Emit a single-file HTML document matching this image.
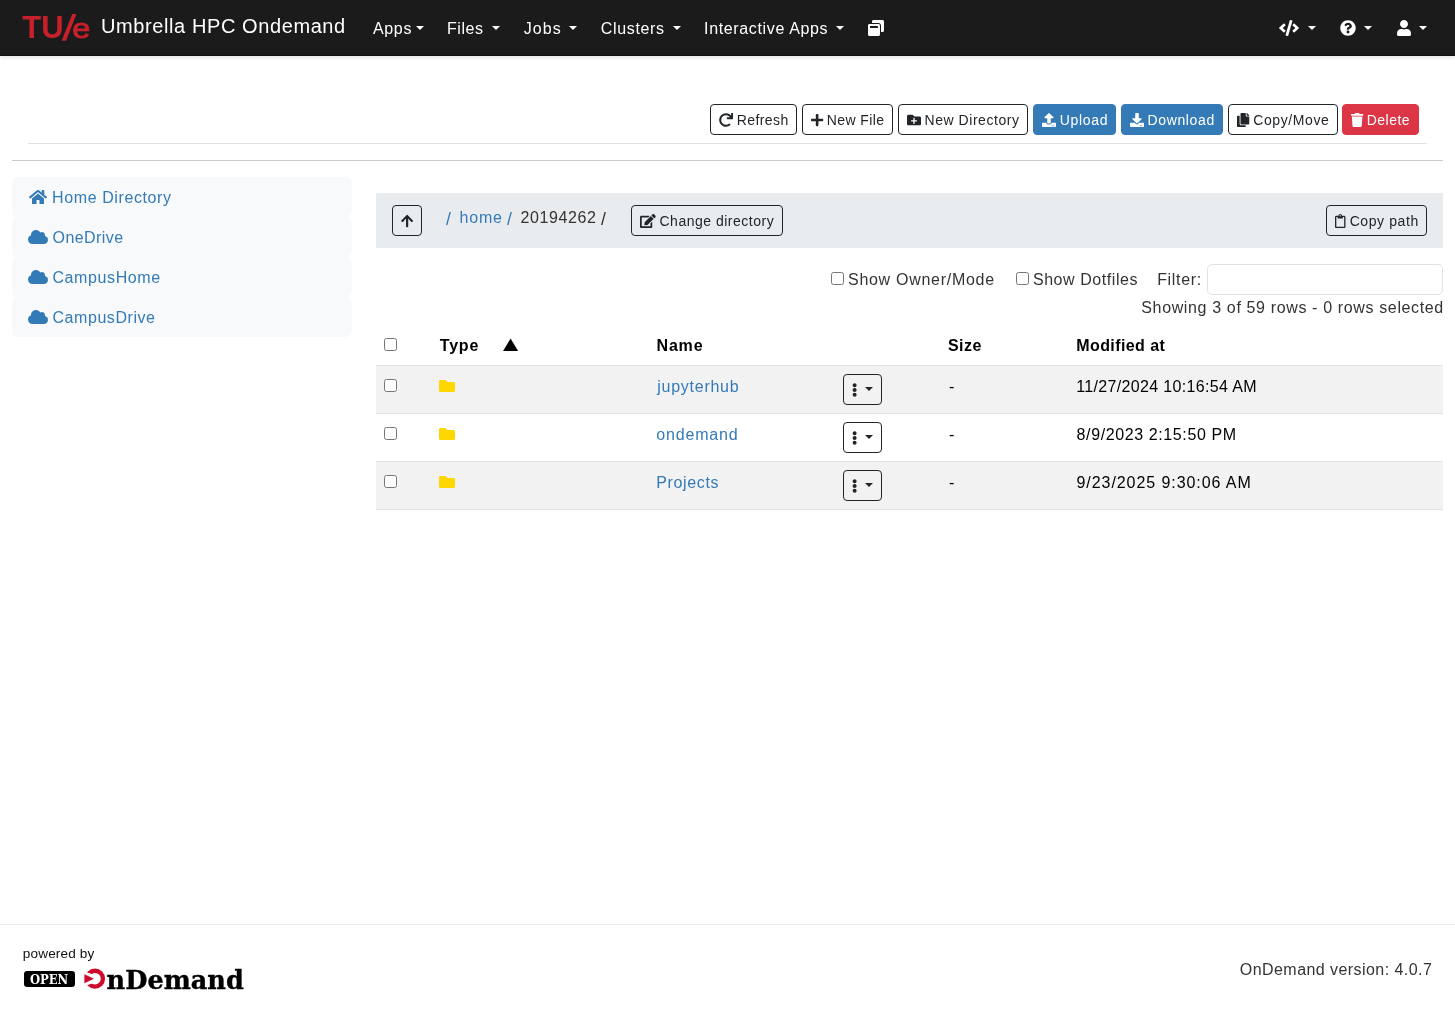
<!DOCTYPE html>
<html lang="en">
<head>
<meta charset="utf-8">
<title>Dashboard - Umbrella HPC Ondemand</title>
<style>
html,body{margin:0;padding:0;}
body{width:1455px;height:1013px;position:relative;overflow:hidden;background:#fff;
  font-family:"Liberation Sans",sans-serif;font-size:16px;color:#212529;}
.abs,.t,.btn,.ic,.caret,.hl,input.cb{position:absolute;}
.t{white-space:pre;display:block;}
nav.top{position:absolute;left:0;top:0;width:1455px;height:55px;background:#1b1b1b;
  border-bottom:1px solid #111;box-sizing:content-box;box-shadow:0 2px 4px rgba(0,0,0,.09);}
.caret{width:0;height:0;border-left:4.8px solid transparent;border-right:4.8px solid transparent;border-top:4.8px solid #fff;}
.caret.sm{border-left-width:4.2px;border-right-width:4.2px;border-top:4.2px solid #212529;}
.btn{box-sizing:border-box;height:31px;border:1px solid #212529;border-radius:4px;background:transparent;}
.btn.primary{background:#337ab7;border-color:#337ab7;}
.btn.danger{background:#dc3545;border-color:#dc3545;}
.ic{display:block;overflow:visible;}
.hl{height:1px;}
.side{position:absolute;left:12px;width:340px;height:40px;background:#f8f9fa;border-radius:6px;}
.pathbar{position:absolute;left:376px;top:193px;width:1067px;height:55px;background:#e9ecef;}
input.cb{margin:0;width:13px;height:13px;}
.filter{position:absolute;margin:0;padding:0 8px;outline:none;font:inherit;left:1207px;top:264px;width:236px;height:30.5px;box-sizing:border-box;border:1px solid #dee2e6;border-radius:5px;background:#fff;}
.row{position:absolute;left:376px;width:1067px;height:47px;border-bottom:1px solid #dee2e6;}
.row.odd{background:#f2f2f2;}
footer.ft{position:absolute;left:0;top:924px;width:1455px;height:89px;border-top:1px solid #ececec;box-sizing:border-box;}
</style>
</head>
<body>
<div id="app" style="position:absolute;left:0;top:0;width:1455px;height:1013px;will-change:transform">

<!-- ============ NAVBAR ============ -->
<nav class="top">
<svg class="ic" style="left:18px;top:8px" width="80" height="40" viewBox="0 0 80 40">
  <g fill="#c8202a" font-family="Liberation Sans, sans-serif">
    <text x="4.3" y="30.4" font-size="31.6" font-weight="700" textLength="41.2" lengthAdjust="spacingAndGlyphs">TU</text>
    <text x="0" y="0" font-size="36" font-weight="700" transform="translate(43.6,32.1) skewX(-11.5)">/</text>
    <text x="0" y="0" font-size="27.8" font-weight="400" stroke="#c8202a" stroke-width="0.9" transform="translate(54.2,30.4) scale(1.17,1)">e</text>
  </g>
</svg>
<span class="t" style="left:101.03px;top:11.00px;font-size:20px;line-height:30px;font-weight:400;color:#fff;letter-spacing:0.594px;">Umbrella HPC Ondemand</span>
<span class="t" style="left:372.89px;top:17.00px;font-size:16px;line-height:24px;font-weight:400;color:#ffffff;letter-spacing:0.703px;">Apps</span>
<span class="t" style="left:446.89px;top:17.00px;font-size:16px;line-height:24px;font-weight:400;color:#ffffff;letter-spacing:0.615px;">Files</span>
<span class="t" style="left:523.87px;top:17.00px;font-size:16px;line-height:24px;font-weight:400;color:#ffffff;letter-spacing:0.993px;">Jobs</span>
<span class="t" style="left:600.87px;top:17.00px;font-size:16px;line-height:24px;font-weight:400;color:#ffffff;letter-spacing:0.64px;">Clusters</span>
<span class="t" style="left:704.09px;top:17.00px;font-size:16px;line-height:24px;font-weight:400;color:#ffffff;letter-spacing:0.644px;">Interactive Apps</span>
<span class="caret" style="left:416.4px;top:26px"></span>
<span class="caret" style="left:491.8px;top:26px"></span>
<span class="caret" style="left:568.8px;top:26px"></span>
<span class="caret" style="left:673px;top:26px"></span>
<span class="caret" style="left:836px;top:26px"></span>
<span class="caret" style="left:1307.8px;top:26px"></span>
<span class="caret" style="left:1363.8px;top:26px"></span>
<span class="caret" style="left:1418.8px;top:26px"></span>
<!-- window-restore -->
<svg class="ic" style="left:868px;top:20px" width="16" height="16" viewBox="0 0 512 512"><path fill="#fff" d="M512 48v288c0 26.500-21.500 48-48 48h-48V176c0-44.100-35.900-80-80-80H128V48c0-26.500 21.500-48 48-48h288c26.500 0 48 21.500 48 48zM384 176v288c0 26.500-21.500 48-48 48H48c-26.500 0-48-21.500-48-48V176c0-26.500 21.500-48 48-48h288c26.500 0 48 21.500 48 48zm-68 28c0-6.600-5.400-12-12-12H76c-6.600 0-12 5.400-12 12v52h252v-52z"/></svg>
<!-- code -->
<svg class="ic" style="left:1279px;top:20px" width="20" height="16" viewBox="0 0 640 512"><path fill="#fff" d="M278.900 511.500l-61-17.700c-6.400-1.800-10-8.500-8.200-14.900L346.200 8.700c1.800-6.400 8.500-10 14.900-8.200l61 17.700c6.400 1.800 10 8.500 8.200 14.900L293.800 503.300c-1.900 6.400-8.500 10.100-14.900 8.200zm-114-112.200l43.500-46.400c4.600-4.900 4.300-12.700-.8-17.200L117 256l90.600-79.700c5.100-4.500 5.500-12.300.8-17.200l-43.500-46.400c-4.500-4.800-12.100-5.100-17-.5L3.800 247.200c-5.100 4.700-5.100 12.800 0 17.500l144.100 135.100c4.900 4.600 12.500 4.400 17-.5zm327.200.6l144.100-135.100c5.100-4.700 5.100-12.800 0-17.500L492.100 112.100c-4.800-4.500-12.400-4.300-17 .5L431.600 159c-4.600 4.900-4.300 12.700.8 17.200L523 256l-90.600 79.700c-5.100 4.500-5.500 12.300-.8 17.200l43.500 46.400c4.500 4.900 12.100 5.100 17 .6z"/></svg>
<!-- question-circle -->
<svg class="ic" style="left:1339.7px;top:20px" width="16" height="16" viewBox="0 0 512 512"><path fill="#fff" d="M504 256c0 136.997-111.043 248-248 248S8 392.997 8 256C8 119.083 119.043 8 256 8s248 111.083 248 248zM262.655 90c-54.497 0-89.255 22.957-116.549 63.758-3.536 5.286-2.353 12.415 2.715 16.258l34.699 26.310c5.205 3.947 12.621 3.008 16.665-2.122 17.864-22.658 30.113-35.797 57.303-35.797 20.429 0 45.698 13.148 45.698 32.958 0 14.976-12.363 22.667-32.534 33.976C247.128 238.528 216 254.941 216 296v4c0 6.627 5.373 12 12 12h56c6.627 0 12-5.373 12-12v-1.333c0-28.462 83.186-29.647 83.186-106.667 0-58.002-60.165-102-116.531-102zM256 338c-25.365 0-46 20.635-46 46 0 25.364 20.635 46 46 46s46-20.636 46-46c0-25.365-20.635-46-46-46z"/></svg>
<!-- user -->
<svg class="ic" style="left:1396.8px;top:20px" width="14" height="16" viewBox="0 0 448 512"><path fill="#fff" d="M224 256c70.700 0 128-57.300 128-128S294.700 0 224 0 96 57.300 96 128s57.300 128 128 128zm89.600 32h-16.700c-22.200 10.200-46.900 16-72.900 16s-50.600-5.800-72.900-16h-16.700C60.200 288 0 348.200 0 422.400V464c0 26.500 21.500 48 48 48h352c26.500 0 48-21.500 48-48v-41.600c0-74.200-60.200-134.400-134.400-134.400z"/></svg>
</nav>

<!-- ============ TOOLBAR ============ -->
<div class="toolbar">
<div class="btn" style="left:710px;top:104px;width:87px"></div>
<div class="btn" style="left:802px;top:104px;width:90.5px"></div>
<div class="btn" style="left:897.8px;top:104px;width:130px"></div>
<div class="btn primary" style="left:1033px;top:104px;width:83px"></div>
<div class="btn primary" style="left:1121px;top:104px;width:102px"></div>
<div class="btn" style="left:1228px;top:104px;width:109.6px"></div>
<div class="btn danger" style="left:1342px;top:104px;width:77px"></div>
<!-- redo -->
<svg class="ic" style="left:719px;top:112.6px" width="14" height="14" viewBox="0 0 512 512"><path fill="#212529" d="M500.330 0h-47.410a12 12 0 0 0-12 12.570l4 82.760A247.420 247.420 0 0 0 256 8C119.340 8 7.900 119.530 8 256.190 8.100 393.070 119.100 504 256 504a247.100 247.100 0 0 0 166.180-63.910 12 12 0 0 0 .480-17.430l-34-34a12 12 0 0 0-16.380-.550A176 176 0 1 1 402.100 157.800l-101.530-4.870a12 12 0 0 0-12.570 12v47.410a12 12 0 0 0 12 12h200.330a12 12 0 0 0 12-12V12a12 12 0 0 0-12-12z"/></svg>
<!-- plus -->
<svg class="ic" style="left:810.5px;top:112.6px" width="12.25" height="14" viewBox="0 0 448 512"><path fill="#212529" d="M416 208H272V64c0-17.670-14.330-32-32-32h-32c-17.670 0-32 14.330-32 32v144H32c-17.670 0-32 14.330-32 32v32c0 17.670 14.330 32 32 32h144v144c0 17.670 14.330 32 32 32h32c17.670 0 32-14.330 32-32V304h144c17.670 0 32-14.330 32-32v-32c0-17.670-14.330-32-32-32z"/></svg>
<!-- folder-plus -->
<svg class="ic" style="left:906.9px;top:112.6px" width="14" height="14" viewBox="0 0 512 512"><path fill="#212529" d="M464 128H272l-64-64H48C21.490 64 0 85.490 0 112v288c0 26.510 21.490 48 48 48h416c26.510 0 48-21.490 48-48V176c0-26.510-21.490-48-48-48zm-96 168c0 8.840-7.160 16-16 16h-72v72c0 8.840-7.160 16-16 16h-16c-8.840 0-16-7.160-16-16v-72h-72c-8.840 0-16-7.160-16-16v-16c0-8.840 7.160-16 16-16h72v-72c0-8.840 7.160-16 16-16h16c8.840 0 16 7.160 16 16v72h72c8.840 0 16 7.160 16 16v16z"/></svg>
<!-- upload -->
<svg class="ic" style="left:1042px;top:112.6px" width="14" height="14" viewBox="0 0 512 512"><path fill="#fff" d="M296 384h-80c-13.300 0-24-10.700-24-24V192h-87.700c-17.800 0-26.700-21.500-14.100-34.100L242.300 5.700c7.500-7.500 19.800-7.500 27.300 0l152.200 152.200c12.600 12.600 3.700 34.100-14.100 34.100H320v168c0 13.300-10.700 24-24 24zm216-8v112c0 13.300-10.700 24-24 24H24c-13.300 0-24-10.700-24-24V376c0-13.300 10.700-24 24-24h136v8c0 30.900 25.100 56 56 56h80c30.900 0 56-25.100 56-56v-8h136c13.300 0 24 10.700 24 24zm-124 88c0-11-9-20-20-20s-20 9-20 20 9 20 20 20 20-9 20-20zm64 0c0-11-9-20-20-20s-20 9-20 20 9 20 20 20 20-9 20-20z"/></svg>
<!-- download -->
<svg class="ic" style="left:1130px;top:112.6px" width="14" height="14" viewBox="0 0 512 512"><path fill="#fff" d="M216 0h80c13.300 0 24 10.700 24 24v168h87.700c17.800 0 26.700 21.500 14.100 34.100L269.700 378.300c-7.500 7.500-19.800 7.500-27.300 0L90.100 226.100c-12.600-12.600-3.700-34.100 14.100-34.100H192V24c0-13.300 10.700-24 24-24zm296 376v112c0 13.300-10.700 24-24 24H24c-13.300 0-24-10.700-24-24V376c0-13.300 10.700-24 24-24h146.700l49 49c20.100 20.100 52.500 20.100 72.600 0l49-49H488c13.300 0 24 10.700 24 24zm-124 88c0-11-9-20-20-20s-20 9-20 20 9 20 20 20 20-9 20-20zm64 0c0-11-9-20-20-20s-20 9-20 20 9 20 20 20 20-9 20-20z"/></svg>
<!-- copy -->
<svg class="ic" style="left:1237px;top:112.6px" width="12.25" height="14" viewBox="0 0 448 512"><path fill="#212529" d="M320 448v40c0 13.255-10.745 24-24 24H24c-13.255 0-24-10.745-24-24V120c0-13.255 10.745-24 24-24h72v296c0 30.879 25.121 56 56 56h168zm0-344V0H152c-13.255 0-24 10.745-24 24v368c0 13.255 10.745 24 24 24h272c13.255 0 24-10.745 24-24V128H344c-13.200 0-24-10.800-24-24zm120.971-31.029L375.029 7.029A24 24 0 0 0 358.059 0H352v96h96v-6.059a24 24 0 0 0-7.029-16.970z"/></svg>
<!-- trash -->
<svg class="ic" style="left:1351.2px;top:112.6px" width="12.25" height="14" viewBox="0 0 448 512"><path fill="#fff" d="M432 32H312l-9.400-18.700A24 24 0 0 0 281.100 0H166.800a23.720 23.720 0 0 0-21.400 13.300L136 32H16A16 16 0 0 0 0 48v32a16 16 0 0 0 16 16h416a16 16 0 0 0 16-16V48a16 16 0 0 0-16-16zM53.200 467a48 48 0 0 0 47.900 45h245.800a48 48 0 0 0 47.900-45L416 128H32z"/></svg>
<span class="t" style="left:736.77px;top:110.00px;font-size:14px;line-height:21px;font-weight:400;color:#212529;letter-spacing:0.397px;">Refresh</span>
<span class="t" style="left:826.77px;top:110.00px;font-size:14px;line-height:21px;font-weight:400;color:#212529;letter-spacing:0.39px;">New File</span>
<span class="t" style="left:924.57px;top:110.00px;font-size:14px;line-height:21px;font-weight:400;color:#212529;letter-spacing:0.536px;">New Directory</span>
<span class="t" style="left:1059.70px;top:110.00px;font-size:14px;line-height:21px;font-weight:400;color:#fff;letter-spacing:0.697px;">Upload</span>
<span class="t" style="left:1147.47px;top:110.00px;font-size:14px;line-height:21px;font-weight:400;color:#fff;letter-spacing:0.645px;">Download</span>
<span class="t" style="left:1253.28px;top:110.00px;font-size:14px;line-height:21px;font-weight:400;color:#212529;letter-spacing:0.596px;">Copy/Move</span>
<span class="t" style="left:1366.77px;top:110.00px;font-size:14px;line-height:21px;font-weight:400;color:#fff;letter-spacing:0.466px;">Delete</span>
</div>
<div class="hl" style="left:28px;top:143px;width:1399px;background:#dee2e6"></div>
<div class="hl" style="left:12px;top:160px;width:1431px;background:#cccccc"></div>

<!-- ============ SIDEBAR ============ -->
<aside>
<div class="side" style="top:177px"></div>
<div class="side" style="top:217px"></div>
<div class="side" style="top:257px"></div>
<div class="side" style="top:297px"></div>
<!-- home -->
<svg class="ic" style="left:29px;top:189px" width="18" height="16" viewBox="0 0 576 512"><path fill="#337ab7" d="M280.370 148.260L96 300.110V464a16 16 0 0 0 16 16l112.060-.290a16 16 0 0 0 15.920-16V368a16 16 0 0 1 16-16h64a16 16 0 0 1 16 16v95.640a16 16 0 0 0 16 16.050L464 480a16 16 0 0 0 16-16V300L295.670 148.260a12.190 12.190 0 0 0-15.300 0zM571.600 251.470L488 182.560V44.050a12 12 0 0 0-12-12h-56a12 12 0 0 0-12 12v72.610L318.470 43a48 48 0 0 0-61 0L4.340 251.470a12 12 0 0 0-1.600 16.900l25.500 31A12 12 0 0 0 45.150 301l235.220-193.740a12.190 12.190 0 0 1 15.300 0L530.900 301a12 12 0 0 0 16.900-1.600l25.500-31a12 12 0 0 0-1.700-16.930z"/></svg>
<!-- clouds -->
<svg class="ic" style="left:28px;top:229px" width="20" height="16" viewBox="0 0 640 512"><path fill="#337ab7" d="M537.600 226.600c4.100-10.700 6.400-22.400 6.400-34.600 0-53-43-96-96-96-19.700 0-38.100 6-53.300 16.200C367 64.200 315.300 32 256 32c-88.400 0-160 71.600-160 160 0 2.700.1 5.400.2 8.100C40.200 219.800 0 273.200 0 336c0 79.500 64.500 144 144 144h368c70.700 0 128-57.300 128-128 0-61.900-44-113.600-102.400-125.400z"/></svg>
<svg class="ic" style="left:28px;top:269px" width="20" height="16" viewBox="0 0 640 512"><path fill="#337ab7" d="M537.600 226.600c4.100-10.700 6.400-22.400 6.400-34.600 0-53-43-96-96-96-19.700 0-38.100 6-53.300 16.200C367 64.200 315.300 32 256 32c-88.400 0-160 71.600-160 160 0 2.700.1 5.400.2 8.100C40.200 219.800 0 273.200 0 336c0 79.500 64.500 144 144 144h368c70.700 0 128-57.300 128-128 0-61.900-44-113.600-102.400-125.400z"/></svg>
<svg class="ic" style="left:28px;top:309px" width="20" height="16" viewBox="0 0 640 512"><path fill="#337ab7" d="M537.600 226.600c4.100-10.700 6.400-22.400 6.400-34.600 0-53-43-96-96-96-19.700 0-38.100 6-53.300 16.200C367 64.200 315.300 32 256 32c-88.400 0-160 71.600-160 160 0 2.700.1 5.400.2 8.100C40.200 219.800 0 273.200 0 336c0 79.500 64.500 144 144 144h368c70.700 0 128-57.300 128-128 0-61.900-44-113.600-102.400-125.400z"/></svg>
<span class="t" style="left:52.09px;top:186.00px;font-size:16px;line-height:24px;font-weight:400;color:#337ab7;letter-spacing:0.601px;">Home Directory</span>
<span class="t" style="left:52.52px;top:226.00px;font-size:16px;line-height:24px;font-weight:400;color:#337ab7;letter-spacing:0.44px;">OneDrive</span>
<span class="t" style="left:52.47px;top:266.00px;font-size:16px;line-height:24px;font-weight:400;color:#337ab7;letter-spacing:0.599px;">CampusHome</span>
<span class="t" style="left:52.47px;top:306.00px;font-size:16px;line-height:24px;font-weight:400;color:#337ab7;letter-spacing:0.558px;">CampusDrive</span>
</aside>

<!-- ============ MAIN ============ -->
<main>
<div class="pathbar"></div>
<div class="btn" style="left:392px;top:205px;width:30.25px"></div>
<div class="btn" style="left:631px;top:205px;width:151.8px"></div>
<div class="btn" style="left:1326px;top:205px;width:101px"></div>
<!-- arrow-up -->
<svg class="ic" style="left:401px;top:213.8px" width="12.25" height="14" viewBox="0 0 448 512"><path fill="#212529" d="M34.900 289.500l-22.200-22.200c-9.400-9.400-9.400-24.600 0-33.900L207 39c9.400-9.400 24.600-9.400 33.900 0l194.300 194.300c9.400 9.400 9.400 24.600 0 33.900L413 289.400c-9.500 9.500-25 9.300-34.300-.4L264 168.600V456c0 13.300-10.700 24-24 24h-32c-13.300 0-24-10.700-24-24V168.600L69.200 289.100c-9.300 9.800-24.800 10-34.300.4z"/></svg>
<!-- edit -->
<svg class="ic" style="left:640px;top:213.8px" width="15.75" height="14" viewBox="0 0 576 512"><path fill="#212529" d="M402.600 83.200l90.200 90.200c3.800 3.800 3.800 10 0 13.800L274.400 405.600l-92.800 10.300c-12.400 1.400-22.900-9.100-21.500-21.500l10.300-92.800L388.800 83.200c3.800-3.800 10-3.800 13.800 0zm162-22.900l-48.800-48.800c-15.200-15.200-39.900-15.200-55.200 0l-35.400 35.400c-3.800 3.800-3.800 10 0 13.800l90.200 90.200c3.800 3.800 10 3.800 13.800 0l35.400-35.400c15.200-15.300 15.200-40 0-55.200zM384 346.200V448H64V128h229.800c3.200 0 6.200-1.300 8.500-3.500l40-40c7.600-7.600 2.200-20.500-8.500-20.500H48C21.500 64 0 85.500 0 112v352c0 26.500 21.500 48 48 48h352c26.500 0 48-21.500 48-48V306.200c0-10.700-12.900-16-20.500-8.500l-40 40c-2.200 2.300-3.500 5.300-3.500 8.500z"/></svg>
<!-- clipboard (regular) -->
<svg class="ic" style="left:1335px;top:213.8px" width="10.5" height="14" viewBox="0 0 384 512"><path fill="#212529" d="M336 64h-80c0-35.300-28.700-64-64-64s-64 28.700-64 64H48C21.500 64 0 85.500 0 112v352c0 26.500 21.500 48 48 48h288c26.500 0 48-21.500 48-48V112c0-26.500-21.500-48-48-48zM192 40c13.300 0 24 10.700 24 24s-10.700 24-24 24-24-10.700-24-24 10.700-24 24-24zm144 418c0 3.300-2.700 6-6 6H54c-3.300 0-6-2.700-6-6V118c0-3.300 2.700-6 6-6h42v36c0 6.600 5.400 12 12 12h168c6.600 0 12-5.400 12-12v-36h42c3.300 0 6 2.700 6 6z"/></svg>

<input type="checkbox" class="cb" style="left:831px;top:272px">
<input type="checkbox" class="cb" style="left:1016px;top:272px">
<input type="text" class="filter" aria-label="Filter">

<!-- table -->
<div class="hl" style="left:376px;top:365px;width:1067px;background:#dee2e6"></div>
<div class="row odd" style="top:366px"></div>
<div class="row" style="top:414px"></div>
<div class="row odd" style="top:462px"></div>
<input type="checkbox" class="cb" style="left:384px;top:338px">
<input type="checkbox" class="cb" style="left:384px;top:379px">
<input type="checkbox" class="cb" style="left:384px;top:427px">
<input type="checkbox" class="cb" style="left:384px;top:475px">
<span class="t" style="left:502.9px;top:332.1px;font-family:'DejaVu Sans',sans-serif;font-size:17px;line-height:24px;color:#000;transform-origin:0 0;transform:scale(1.16,0.955)">&#9650;</span>
<svg class="ic" style="left:439.2px;top:378.2px" width="16" height="16" viewBox="0 0 512 512"><path fill="#ffd700" d="M464 128H272l-64-64H48C21.490 64 0 85.490 0 112v288c0 26.510 21.490 48 48 48h416c26.510 0 48-21.490 48-48V176c0-26.510-21.490-48-48-48z"/></svg>
<div class="btn" style="left:843px;top:374px;width:39px"></div>
<svg class="ic" style="left:852px;top:383px" width="5.25" height="14" viewBox="0 0 192 512"><path fill="#212529" d="M96 184c39.800 0 72 32.200 72 72s-32.200 72-72 72-72-32.200-72-72 32.200-72 72-72zM24 80c0 39.800 32.200 72 72 72s72-32.200 72-72S135.800 8 96 8 24 40.200 24 80zm0 352c0 39.800 32.200 72 72 72s72-32.200 72-72-32.200-72-72-72-72 32.200-72 72z"/></svg>
<span class="caret sm" style="left:864.5px;top:387px"></span>
<svg class="ic" style="left:439.2px;top:426.2px" width="16" height="16" viewBox="0 0 512 512"><path fill="#ffd700" d="M464 128H272l-64-64H48C21.490 64 0 85.490 0 112v288c0 26.510 21.490 48 48 48h416c26.510 0 48-21.490 48-48V176c0-26.510-21.490-48-48-48z"/></svg>
<div class="btn" style="left:843px;top:422px;width:39px"></div>
<svg class="ic" style="left:852px;top:431px" width="5.25" height="14" viewBox="0 0 192 512"><path fill="#212529" d="M96 184c39.800 0 72 32.200 72 72s-32.200 72-72 72-72-32.200-72-72 32.200-72 72-72zM24 80c0 39.800 32.200 72 72 72s72-32.200 72-72S135.800 8 96 8 24 40.200 24 80zm0 352c0 39.800 32.200 72 72 72s72-32.200 72-72-32.200-72-72-72-72 32.200-72 72z"/></svg>
<span class="caret sm" style="left:864.5px;top:435px"></span>
<svg class="ic" style="left:439.2px;top:474.2px" width="16" height="16" viewBox="0 0 512 512"><path fill="#ffd700" d="M464 128H272l-64-64H48C21.490 64 0 85.490 0 112v288c0 26.510 21.490 48 48 48h416c26.510 0 48-21.490 48-48V176c0-26.510-21.490-48-48-48z"/></svg>
<div class="btn" style="left:843px;top:470px;width:39px"></div>
<svg class="ic" style="left:852px;top:479px" width="5.25" height="14" viewBox="0 0 192 512"><path fill="#212529" d="M96 184c39.800 0 72 32.200 72 72s-32.200 72-72 72-72-32.200-72-72 32.200-72 72-72zM24 80c0 39.800 32.200 72 72 72s72-32.200 72-72S135.800 8 96 8 24 40.200 24 80zm0 352c0 39.800 32.200 72 72 72s72-32.200 72-72-32.200-72-72-72-72 32.200-72 72z"/></svg>
<span class="caret sm" style="left:864.5px;top:483px"></span>
<span class="t" style="left:446.37px;top:206.00px;font-size:16px;line-height:24px;font-weight:400;color:#337ab7;letter-spacing:0px;transform-origin:0 5px;transform:scale(1.1,1.18);">/</span>
<span class="t" style="left:459.50px;top:206.00px;font-size:16px;line-height:24px;font-weight:400;color:#337ab7;letter-spacing:0.819px;">home</span>
<span class="t" style="left:507.12px;top:206.00px;font-size:16px;line-height:24px;font-weight:400;color:#337ab7;letter-spacing:0px;transform-origin:0 5px;transform:scale(1.1,1.18);">/</span>
<span class="t" style="left:520.42px;top:206.00px;font-size:16px;line-height:24px;font-weight:400;color:#333;letter-spacing:0.611px;">20194262</span>
<span class="t" style="left:601.42px;top:206.00px;font-size:16px;line-height:24px;font-weight:400;color:#333;letter-spacing:0px;transform-origin:0 5px;transform:scale(1.1,1.18);">/</span>
<span class="t" style="left:659.48px;top:211.00px;font-size:14px;line-height:21px;font-weight:400;color:#212529;letter-spacing:0.505px;">Change directory</span>
<span class="t" style="left:1349.68px;top:211.00px;font-size:14px;line-height:21px;font-weight:400;color:#212529;letter-spacing:0.59px;">Copy path</span>
<span class="t" style="left:848.00px;top:268.00px;font-size:16px;line-height:24px;font-weight:400;color:#333;letter-spacing:0.718px;">Show Owner/Mode</span>
<span class="t" style="left:1032.90px;top:268.00px;font-size:16px;line-height:24px;font-weight:400;color:#333;letter-spacing:0.571px;">Show Dotfiles</span>
<span class="t" style="left:1157.19px;top:268.00px;font-size:16px;line-height:24px;font-weight:400;color:#333;letter-spacing:0.659px;">Filter:</span>
<span class="t" style="left:1141.30px;top:296.00px;font-size:16px;line-height:24px;font-weight:400;color:#333;letter-spacing:0.638px;">Showing 3 of 59 rows - 0 rows selected</span>
<span class="t" style="left:439.73px;top:334.00px;font-size:16px;line-height:24px;font-weight:700;color:#000;letter-spacing:0.823px;">Type</span>
<span class="t" style="left:656.50px;top:334.00px;font-size:16px;line-height:24px;font-weight:700;color:#000;letter-spacing:0.833px;">Name</span>
<span class="t" style="left:947.90px;top:334.00px;font-size:16px;line-height:24px;font-weight:700;color:#000;letter-spacing:0.495px;">Size</span>
<span class="t" style="left:1076.20px;top:334.00px;font-size:16px;line-height:24px;font-weight:700;color:#000;letter-spacing:0.418px;">Modified at</span>
<span class="t" style="left:657.25px;top:375.00px;font-size:16px;line-height:24px;font-weight:400;color:#337ab7;letter-spacing:0.739px;">jupyterhub</span>
<span class="t" style="left:949.05px;top:375.00px;font-size:16px;line-height:24px;font-weight:400;color:#000;letter-spacing:0px;">-</span>
<span class="t" style="left:1076.20px;top:375.00px;font-size:16px;line-height:24px;font-weight:400;color:#000;letter-spacing:0.344px;">11/27/2024 10:16:54 AM</span>
<span class="t" style="left:656.15px;top:423.00px;font-size:16px;line-height:24px;font-weight:400;color:#337ab7;letter-spacing:0.854px;">ondemand</span>
<span class="t" style="left:949.05px;top:423.00px;font-size:16px;line-height:24px;font-weight:400;color:#000;letter-spacing:0px;">-</span>
<span class="t" style="left:1076.60px;top:423.00px;font-size:16px;line-height:24px;font-weight:400;color:#000;letter-spacing:0.605px;">8/9/2023 2:15:50 PM</span>
<span class="t" style="left:656.19px;top:471.00px;font-size:16px;line-height:24px;font-weight:400;color:#337ab7;letter-spacing:0.651px;">Projects</span>
<span class="t" style="left:949.05px;top:471.00px;font-size:16px;line-height:24px;font-weight:400;color:#000;letter-spacing:0px;">-</span>
<span class="t" style="left:1076.52px;top:471.00px;font-size:16px;line-height:24px;font-weight:400;color:#000;letter-spacing:0.93px;">9/23/2025 9:30:06 AM</span>
</main>

<!-- ============ FOOTER ============ -->
<footer class="ft"></footer>
<div class="abs" style="left:24px;top:970.8px;width:50.6px;height:16.2px;background:#000;border-radius:3.2px"></div>
<svg class="ic" style="left:20px;top:962px" width="240" height="34" viewBox="0 0 240 34">
  <text x="9.9" y="21.95" font-family="DejaVu Serif, Liberation Serif, serif" font-weight="700" font-size="12.5" fill="#fff" textLength="38.3" lengthAdjust="spacingAndGlyphs">OPEN</text>
  <!-- OnDemand "O" mark -->
  <circle cx="74.95" cy="16.7" r="7.95" fill="none" stroke="#cf0a2c" stroke-width="4.3"/>
  <path d="M58 7.1L58 26.5L79 18.9L79 14.700z" fill="#fff"/>
  <path d="M64.400 12.300L64.400 21.200L74 16.800z" fill="#cf0a2c"/>
  <text x="86.600" y="26.6" font-family="DejaVu Serif, Liberation Serif, serif" font-weight="700" font-size="26.6" fill="#000" stroke="#000" stroke-width="0.4" textLength="137.200" lengthAdjust="spacingAndGlyphs">nDemand</text>
</svg>
<span class="t" style="left:22.81px;top:944.00px;font-size:13.6px;line-height:20px;font-weight:400;color:#111;letter-spacing:0.144px;">powered by</span>
<span class="t" style="left:1239.82px;top:958.00px;font-size:16px;line-height:24px;font-weight:400;color:#333;letter-spacing:0.441px;">OnDemand version: 4.0.7</span>
</div>
</body>
</html>
